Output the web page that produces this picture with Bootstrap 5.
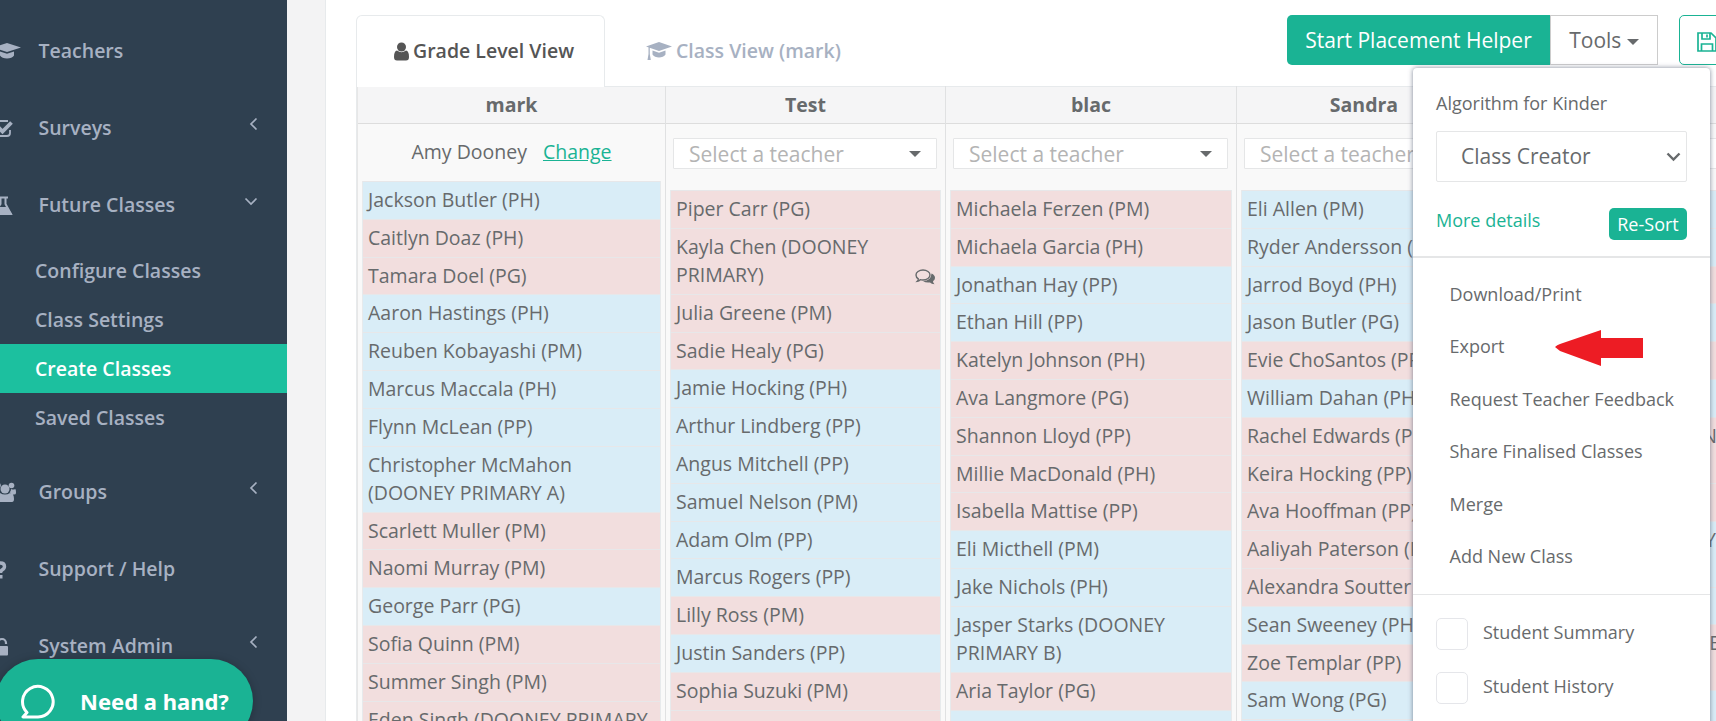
<!DOCTYPE html>
<html lang="en">
<head>
<meta charset="utf-8">
<title>Create Classes</title>
<link href="https://cdn.jsdelivr.net/npm/bootstrap@5.3.0/dist/css/bootstrap.min.css" rel="stylesheet">
<style>
body{font-family:"Open Sans",sans-serif;font-size:19.5px;color:#676a6c;background:#f3f3f4;line-height:28.2px}
.app-shell{height:721px}
.side-menu{width:287px;background:#2f4050;color:#a7b1c2;font-weight:600;padding-top:13px}
.side-item{height:77px;padding-left:38.5px}
.side-item .ico{position:absolute;left:-9px}
.side-item .arr{margin-left:auto;margin-right:29px;margin-top:-9px}
.side-sub{padding:2px 0 12px}
.side-sub a{height:49px;padding:1px 0 0 35px;color:#a7b1c2;text-decoration:none}
.side-sub a.on{background:#1cc09f;color:#fff}
.main-panel{margin-left:38px;border-left:1px solid #e7eaec;background:#fff;padding:15px 0 0 30px;min-width:0}
.top-row{height:71px}
.tab-on{width:249px;height:72px;border:1px solid #e7eaec;border-bottom:0;border-radius:6px 6px 0 0;background:#fff;color:#555;font-weight:600;position:relative;z-index:1;padding-left:37px}
.tab-off{color:#a7b1c2;font-weight:600;padding-left:41px;height:72px}
.action-bar{margin-right:-83px}
.btn{font-size:21px;line-height:30px}
.btn-main{width:263px;height:50px;background:#1ab394;color:#fff;border-radius:5px 0 0 5px;padding:0}
.btn-tools{width:108px;height:50px;border:1px solid #ccc;border-radius:0;background:#fff;color:#676a6c;padding:0}
.btn-save{width:120px;height:50px;border:1px solid #1ab394;border-radius:5px;background:#fff;padding:0 0 0 17px;margin-left:21px;text-align:left}
.tri{display:inline-block;border:6px solid transparent;border-top-color:#676a6c;border-bottom:0}
.board{display:grid;grid-template-columns:309px 280px 291px 255px 260px;border-left:1px solid #e7eaec;background:#f9f9f9;height:700px}
.lane{border-right:1px solid #e0e1e2;min-width:0}
.lane:first-child{border-left:1px solid #e7e7e7}
.lane-head{height:38px;background:#f5f5f6;border-top:1px solid #e7eaec;border-bottom:1px solid #ddd;font-weight:700}
.pick{margin:14px 8px 21px 7px;height:31px;border:1px solid #e5e6e7;background:#fff;border-radius:1px;padding:1px 15px 0;color:#b4b4b4;font-size:21px}
.owner{height:57px}
.owner a{color:#1ab394}
.kids{margin:0 4px;border:1px solid #e7eaec;border-top:0;list-style:none;padding:0}
.kids li{border-top:1px solid #e7e7e9;padding:4px 4px 4.6px 5px;position:relative;white-space:nowrap}
.b{background:#d9edf7}.g{background:#f2dede}
.kids .talk{position:absolute;right:4px;bottom:8px}
.tail li{padding-left:0;text-align:right}
.tools-menu{position:absolute;left:1413px;top:68px;width:297px;height:700px;background:#fff;border-radius:4px;box-shadow:0 0 5px rgba(86,96,117,.75);font-size:18px;z-index:5}
.algo{padding:20px 23px 15px;height:188px}
.algo-pick{height:51px;border:1px solid #e5e6e7;border-radius:2px;margin-top:13px;padding:0 5px 0 24px;font-size:21px}
.algo a{color:#1ab394;text-decoration:none}
.btn-sort{width:78px;height:32px;background:#1ab394;color:#fff;font-size:18px;line-height:28px;padding:0;border-radius:5px;margin-top:2px}
.menu-links{border-top:2px solid #e5e6e7;border-bottom:1px solid #e5e6e7;padding:10px 0 13px 36.500px;height:339px}
.menu-links div{height:52.4px}
.tick{height:54px;padding-left:23px;gap:15px}
.tick:nth-of-type(3){margin-top:12px}
.tick span{width:32px;height:32px;border:1px solid #e5e6ea;border-radius:5px}
.tick b{font-weight:400;margin-top:-3px}
.pointer{position:absolute;left:1555px;top:330px;z-index:6}
.help-pill{position:absolute;left:-4px;top:659px;width:257px;height:84px;border-radius:42px;background:#1ab394;color:#fff;font:700 22px "Noto Sans",sans-serif;padding-left:25px;gap:25px;z-index:4;box-shadow:0 1px 8px rgba(0,0,0,.25)}
</style>
</head>
<body class="overflow-hidden">
<div class="app-shell d-flex overflow-hidden position-relative">
  <nav class="side-menu flex-shrink-0">
    <div class="side-item d-flex align-items-center position-relative"><svg class="ico" style="left:-7px" width="28" height="20" viewBox="0 0 28 20" fill="#a7b1c2"><path d="M14 1 28 5.500 14 10 0 5.500zM7 9.500l7 2.300 7-2.300v4c-1 2-4 3-7 3s-6-1-7-3z"/></svg>Teachers</div>
    <div class="side-item d-flex align-items-center position-relative"><svg class="ico" width="23" height="20" viewBox="0 0 23 20" fill="none" stroke="#a7b1c2"><path d="M17 2H6a3 3 0 0 0-3 3v9a3 3 0 0 0 3 3h10a3 3 0 0 0 3-3v-3" stroke-width="1.800"/><path d="M6.500 7.500 11.500 12.500 20.500 3.500" stroke-width="3.800"/></svg>Surveys<svg class="arr" width="9" height="14" viewBox="0 0 9 14" fill="none" stroke="#a7b1c2" stroke-width="1.700"><path d="M7.500 1.500 2 7l5.500 5.500"/></svg></div>
    <div class="side-item d-flex align-items-center position-relative"><svg class="ico" style="left:-8px" width="21" height="20" viewBox="0 0 21 20"><path d="M6 1.500h10M8.500 2v6L2 18h17L13.500 8V2" fill="none" stroke="#a7b1c2" stroke-width="2"/><path d="M7 11h8l5 7H2z" fill="#a7b1c2"/></svg>Future Classes<svg class="arr" width="14" height="9" viewBox="0 0 14 9" fill="none" stroke="#a7b1c2" stroke-width="1.700"><path d="M1.500 1.500 7 7l5.500-5.500"/></svg></div>
    <div class="side-sub">
      <a class="d-flex align-items-center" href="#">Configure Classes</a>
      <a class="d-flex align-items-center" href="#">Class Settings</a>
      <a class="d-flex align-items-center on" href="#">Create Classes</a>
      <a class="d-flex align-items-center" href="#">Saved Classes</a>
    </div>
    <div class="side-item d-flex align-items-center position-relative"><svg class="ico" width="26" height="21" viewBox="0 0 26 21" fill="#a7b1c2"><circle cx="14" cy="7" r="4.500"/><circle cx="20.500" cy="3.500" r="2.800"/><circle cx="7" cy="3.500" r="2.800"/><path d="M7 20q-2 0-2-3 0-6 4-6 5 3 10 0 4 0 4 6 0 3-2 3zM20 7q3 1 4 0 1 0 1 4 0 1.500-2 1.500h-2q-1-2-2.500-2 1.500-1 1.500-3.500z"/></svg>Groups<svg class="arr" width="9" height="14" viewBox="0 0 9 14" fill="none" stroke="#a7b1c2" stroke-width="1.700"><path d="M7.500 1.500 2 7l5.500 5.500"/></svg></div>
    <div class="side-item d-flex align-items-center position-relative"><svg class="ico" style="left:-6px" width="14" height="18" viewBox="0 0 14 18"><path d="M1.500 5.500Q3 2 6.500 2q4 0 4 3.500 0 2-2.500 3.500-1.500 1-1.500 3" fill="none" stroke="#a7b1c2" stroke-width="3.400"/><path d="M4.500 14h4v3.500h-4z" fill="#a7b1c2"/></svg>Support / Help</div>
    <div class="side-item d-flex align-items-center position-relative"><svg class="ico" style="left:-8px" width="17" height="19" viewBox="0 0 17 19"><path d="M6 9V6a4 4 0 0 1 8 0v1" fill="none" stroke="#a7b1c2" stroke-width="2.200"/><rect x="1" y="9" width="15" height="9.500" rx="1" fill="#a7b1c2"/></svg>System Admin<svg class="arr" width="9" height="14" viewBox="0 0 9 14" fill="none" stroke="#a7b1c2" stroke-width="1.700"><path d="M7.500 1.500 2 7l5.500 5.500"/></svg></div>
  </nav>

  <main class="main-panel flex-grow-1 overflow-hidden">
    <div class="top-row d-flex">
      <div class="tab-on d-flex align-items-center flex-shrink-0"><svg class="me-1" width="15" height="19" viewBox="0 0 15 19" fill="#555"><circle cx="7.500" cy="5" r="4.500"/><path d="M3 8.500Q7.500 12 12 8.500 15 9 15 15q0 3.500-3 3.500H3q-3 0-3-3.500 0-6 3-6.500z"/></svg>Grade Level View</div>
      <div class="tab-off d-flex align-items-center flex-shrink-0"><svg class="me-1" width="26" height="20" viewBox="0 0 26 20" fill="#a7b1c2"><path d="M13 1 26 5.500 13 10 0 5.500zM6.500 9.500l6.500 2.300 6.500-2.300v4c-1 2-4 3-6.500 3s-5.500-1-6.500-3zM2.500 6.500h1.300V13l1 6H1.500l1-6z"/></svg>Class View (mark)</div>
      <div class="d-flex ms-auto flex-shrink-0 action-bar">
        <button class="btn btn-main">Start Placement Helper</button>
        <button class="btn btn-tools">Tools <i class="tri align-middle"></i></button>
        <button class="btn btn-save"><svg width="20" height="20" viewBox="0 0 20 20" fill="none" stroke="#1ab394" stroke-width="1.700"><path d="M1 1h13l5 5v13H1zM5 1v6h8V1M4.500 19v-7h11v7M10 2.500v3"/></svg></button>
      </div>
    </div>
    <div class="board">
      <section class="lane">
        <div class="lane-head d-flex align-items-center justify-content-center">mark</div>
        <div class="owner d-flex align-items-center justify-content-center"><span class="me-3">Amy Dooney</span><a href="#">Change</a></div>
        <ul class="kids"><li class="b">Jackson Butler (PH)</li><li class="g">Caitlyn Doaz (PH)</li><li class="g">Tamara Doel (PG)</li><li class="b">Aaron Hastings (PH)</li><li class="b">Reuben Kobayashi (PM)</li><li class="b">Marcus Maccala (PH)</li><li class="b">Flynn McLean (PP)</li><li class="b">Christopher McMahon<br>(DOONEY PRIMARY A)</li><li class="g">Scarlett Muller (PM)</li><li class="g">Naomi Murray (PM)</li><li class="b">George Parr (PG)</li><li class="g">Sofia Quinn (PM)</li><li class="g">Summer Singh (PM)</li><li class="g">Eden Singh (DOONEY PRIMARY</li></ul>
      </section>
      <section class="lane">
        <div class="lane-head d-flex align-items-center justify-content-center">Test</div>
        <div class="pick d-flex align-items-center justify-content-between">Select a teacher<i class="tri"></i></div>
        <ul class="kids"><li class="g">Piper Carr (PG)</li><li class="g">Kayla Chen (DOONEY<br>PRIMARY)<svg class="talk" width="21" height="17" viewBox="0 0 21 17"><path d="M8 1c4 0 7 2.200 7 5s-3 5-7 5c-1 0-2 0-2.800-.3Q4 12 2.300 12.300 3.500 11 3.300 9.800 1 8.500 1 6c0-2.800 3-5 7-5z" fill="none" stroke="#676a6c" stroke-width="1.400"/><path d="M16.500 4.500q3.500 1.500 3.500 4.500 0 2-2 3.300 0 1.500 1.500 3-3 0-4.500-1.800-4.500.5-7-1.500 8 0 8.500-7.500z" fill="#676a6c"/></svg></li><li class="g">Julia Greene (PM)</li><li class="g">Sadie Healy (PG)</li><li class="b">Jamie Hocking (PH)</li><li class="b">Arthur Lindberg (PP)</li><li class="b">Angus Mitchell (PP)</li><li class="b">Samuel Nelson (PM)</li><li class="b">Adam Olm (PP)</li><li class="b">Marcus Rogers (PP)</li><li class="g">Lilly Ross (PM)</li><li class="b">Justin Sanders (PP)</li><li class="g">Sophia Suzuki (PM)</li><li class="g">&nbsp;</li></ul>
      </section>
      <section class="lane">
        <div class="lane-head d-flex align-items-center justify-content-center">blac</div>
        <div class="pick d-flex align-items-center justify-content-between">Select a teacher<i class="tri"></i></div>
        <ul class="kids"><li class="g">Michaela Ferzen (PM)</li><li class="g">Michaela Garcia (PH)</li><li class="b">Jonathan Hay (PP)</li><li class="b">Ethan Hill (PP)</li><li class="g">Katelyn Johnson (PH)</li><li class="g">Ava Langmore (PG)</li><li class="g">Shannon Lloyd (PP)</li><li class="g">Millie MacDonald (PH)</li><li class="g">Isabella Mattise (PP)</li><li class="b">Eli Micthell (PM)</li><li class="b">Jake Nichols (PH)</li><li class="b">Jasper Starks (DOONEY<br>PRIMARY B)</li><li class="g">Aria Taylor (PG)</li><li class="b">&nbsp;</li></ul>
      </section>
      <section class="lane">
        <div class="lane-head d-flex align-items-center justify-content-center">Sandra</div>
        <div class="pick d-flex align-items-center justify-content-between">Select a teacher<i class="tri"></i></div>
        <ul class="kids"><li class="b">Eli Allen (PM)</li><li class="b">Ryder Andersson (PP)</li><li class="b">Jarrod Boyd (PH)</li><li class="b">Jason Butler (PG)</li><li class="g">Evie ChoSantos (PP)</li><li class="b">William Dahan (PH)</li><li class="g">Rachel Edwards (PP)</li><li class="g">Keira Hocking (PP)</li><li class="g">Ava Hooffman (PP)</li><li class="g">Aaliyah Paterson (PP)</li><li class="g">Alexandra Soutter</li><li class="b">Sean Sweeney (PH)</li><li class="g">Zoe Templar (PP)</li><li class="b">Sam Wong (PG)</li><li class="b">&nbsp;</li></ul>
      </section>
      <section class="lane">
        <div class="lane-head"></div>
        <div class="pick"></div>
        <ul class="kids tail"><li class="b">&nbsp;</li><li class="b">&nbsp;</li><li class="g">&nbsp;</li><li class="b">&nbsp;</li><li class="g">&nbsp;</li><li class="b">&nbsp;</li><li class="g" style="padding-right:29px">N<br>&nbsp;</li><li class="g">&nbsp;</li><li class="b" style="padding-right:30px">Y<br>&nbsp;</li><li class="b">&nbsp;</li><li class="g" style="padding-right:26px">E<br>&nbsp;</li><li class="b">&nbsp;</li></ul>
      </section>
    </div>
  </main>

  <div class="tools-menu">
    <div class="algo">
      <div style="line-height:30px">Algorithm for Kinder</div>
      <div class="algo-pick d-flex align-items-center justify-content-between">Class Creator<svg width="15" height="10" viewBox="0 0 15 10" fill="none" stroke="#676a6c" stroke-width="2.400"><path d="M1.500 1.500l6 6 6-6"/></svg></div>
      <div class="d-flex align-items-start justify-content-between mt-4"><a href="#">More details</a><button class="btn btn-sort">Re-Sort</button></div>
    </div>
    <div class="menu-links">
      <div class="d-flex align-items-center">Download/Print</div><div class="d-flex align-items-center">Export</div><div class="d-flex align-items-center">Request Teacher Feedback</div><div class="d-flex align-items-center">Share Finalised Classes</div><div class="d-flex align-items-center">Merge</div><div class="d-flex align-items-center">Add New Class</div>
    </div>
    <div class="tick d-flex align-items-center"><span></span><b>Student Summary</b></div>
    <div class="tick d-flex align-items-center"><span></span><b>Student History</b></div>
  </div>
  <svg class="pointer" width="88" height="36" viewBox="0 0 88 36" fill="#ed1c24"><path d="M0 17 Q2 15 5 14L46 0v8h42v20H46v8L5 21z"/></svg>
  <div class="help-pill d-flex align-items-center"><svg width="34" height="35" viewBox="0 0 34 35" fill="none" stroke="#fff" stroke-width="3"><path d="M17 33A15.300 15.300 0 1 0 6 28.500L2 33z" stroke-linejoin="round"/></svg>Need a hand?</div>
</div>
<script src="https://cdn.jsdelivr.net/npm/bootstrap@5.3.0/dist/js/bootstrap.bundle.min.js"></script>
</body>
</html>
